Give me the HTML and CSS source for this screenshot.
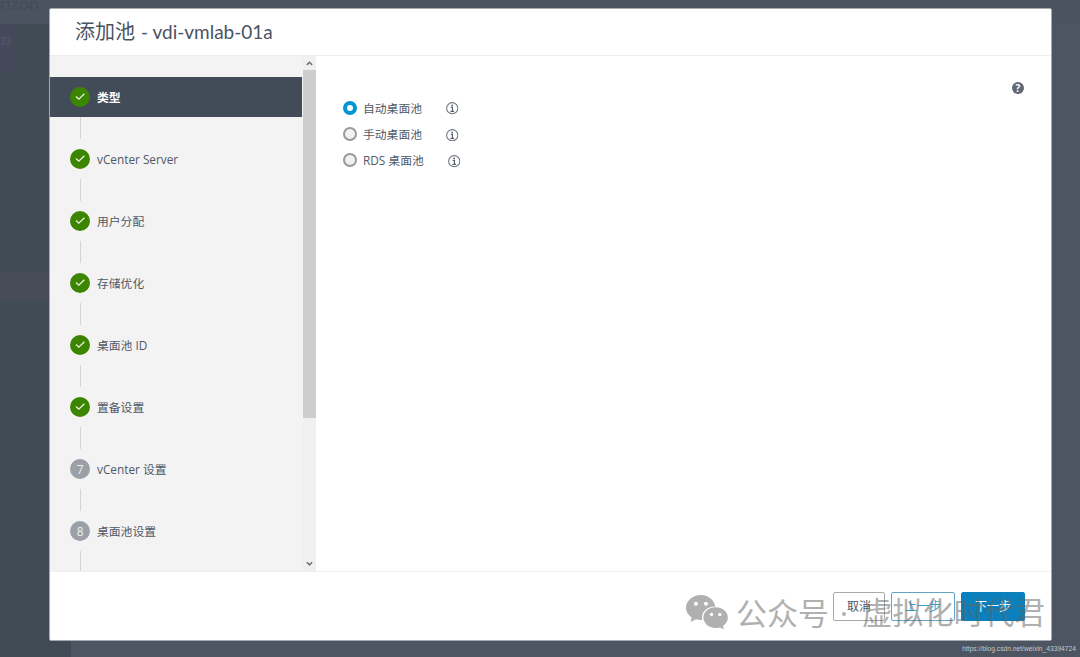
FILE: index.html
```
<!DOCTYPE html>
<html lang="zh-CN">
<head>
    <meta charset="UTF-8">
    <meta name="viewport" content="width=device-width, initial-scale=1.0">
    <title>添加池</title>
    <link rel="stylesheet" href="styles.css">
</head>
<body>
    <div class="backdrop">
        <div class="topbar"><span>rizon<sup>®</sup></span></div>
        <div class="sidenav">
            <div class="badge">33</div>
            <div class="nav-active"></div>
        </div>
    </div>

    <svg width="0" height="0" class="defs">
        <symbol id="check" viewBox="0 0 20 20"><path d="M6 9.600l2.800 2.600L14.400 6.700" fill="none" stroke="#e9f3e2" stroke-width="1.300"/></symbol>
        <symbol id="info" viewBox="0 0 12 12">
            <circle cx="6" cy="6" r="5.400" fill="none" stroke="#6b737e" stroke-width="1"/>
            <circle cx="5.900" cy="3.200" r=".85" fill="#565f6b"/>
            <path d="M4.600 5.200h1.600v3.700M4.300 9h3.500" fill="none" stroke="#565f6b" stroke-width="1.100"/>
        </symbol>
    </svg>

    <div class="modal">
        <div class="modal-header"><span class="title-cn">添加池</span><span class="title-id">- vdi-vmlab-01a</span></div>
        <div class="modal-body">
            <div class="steps">
                <div class="step active"><svg class="dot done"><use href="#check"/></svg><span>类型</span></div>
                <div class="line"></div>
                <div class="step"><svg class="dot done"><use href="#check"/></svg><span>vCenter Server</span></div>
                <div class="line"></div>
                <div class="step"><svg class="dot done"><use href="#check"/></svg><span>用户分配</span></div>
                <div class="line"></div>
                <div class="step"><svg class="dot done"><use href="#check"/></svg><span>存储优化</span></div>
                <div class="line"></div>
                <div class="step"><svg class="dot done"><use href="#check"/></svg><span>桌面池 ID</span></div>
                <div class="line"></div>
                <div class="step"><svg class="dot done"><use href="#check"/></svg><span>置备设置</span></div>
                <div class="line"></div>
                <div class="step"><i class="dot">7</i><span>vCenter 设置</span></div>
                <div class="line"></div>
                <div class="step"><i class="dot">8</i><span>桌面池设置</span></div>
                <div class="line"></div>
            </div>
            <div class="scrollbar">
                <svg width="13" height="14"><path d="M3.900 8.900L6.500 6.300l2.600 2.600" fill="none" stroke="#707070" stroke-width="1.500"/></svg>
                <div class="thumb"></div>
                <svg width="13" height="14"><path d="M3.900 5.300l2.600 2.600 2.600-2.600" fill="none" stroke="#707070" stroke-width="1.500"/></svg>
            </div>
            <div class="content">
                <div class="options">
                    <div class="option"><span class="radio checked"></span><span class="label">自动桌面池</span><svg class="info"><use href="#info"/></svg></div>
                    <div class="option"><span class="radio"></span><span class="label">手动桌面池</span><svg class="info"><use href="#info"/></svg></div>
                    <div class="option"><span class="radio"></span><span class="label">RDS 桌面池</span><svg class="info"><use href="#info"/></svg></div>
                </div>
                <div class="help">?</div>
            </div>
        </div>
        <div class="modal-footer">
            <div class="btn cancel">取消</div>
            <div class="btn back">上一步</div>
            <div class="btn next">下一步</div>
        </div>
    </div>

    <div class="watermark">
        <svg width="42" height="35" viewBox="0 0 42 35">
            <path fill-rule="evenodd" d="M15 0C6.700 0 0 5.700 0 12.800c0 4 2.200 7.500 5.600 9.800L4.700 27l5.400-2.700c1.500.4 3.200.6 4.900.6h1.400c-2.100-7 4-13.700 12.900-13.500C28.200 4.900 22.200 0 15 0zM9.900 6.700a2 2 0 110 4 2 2 0 010-4zm10.100 0a2 2 0 110 4 2 2 0 010-4z"/>
            <path fill-rule="evenodd" d="M29.600 12.300c-6.900 0-12.200 4.600-12.200 10.300 0 5.800 5.300 10.400 12.200 10.400 1.500 0 2.900-.2 4.200-.6l4.200 2.200-1-3.600c3-1.900 4.900-5 4.900-8.400 0-5.700-5.500-10.300-12.300-10.300zM25.500 17.800a1.700 1.700 0 110 3.400 1.700 1.700 0 010-3.400zm8.300 0a1.700 1.700 0 110 3.400 1.700 1.700 0 010-3.400z"/>
        </svg>
        <span class="wm-left">公众号</span><span class="wm-dot"></span><span class="wm-right">虚拟化时代君</span>
    </div>
    <div class="source">https://blog.csdn.net/weixin_43394724</div>
</body>
</html>
```
FILE: styles.css
```
* { margin: 0; padding: 0; box-sizing: border-box; }
body { width: 1080px; height: 657px; overflow: hidden; position: relative; background-color: #4d5562; color: #505866; font-family: "Open Sans", "Noto Sans CJK SC", sans-serif; font-size: 11.8px; padding: 8px 28px 0 49px; }
.defs { position: absolute; }

/* page behind the dialog */
.backdrop { position: absolute; inset: 0; z-index: -1; }
.topbar { height: 24px; background-color: #4b5361; color: #434c58; font: 18px/2px Lato, sans-serif; }
.topbar sup { font-size: 6px; }
.sidenav { width: 71px; height: 633px; background-color: #414b56; }
.badge { width: 14px; height: 47px; background-color: #45485a; color: #50546a; font: bold 10px/35px "Open Sans", sans-serif; }
.nav-active { height: 28px; margin-top: 202px; background-color: #484c59; }

.modal { width: 1003px; height: 633px; border: 1px solid #a5aab0; border-radius: 2px; background-color: #fff; display: flex; flex-direction: column; }
.modal-header { height: 47px; border-bottom: 1px solid #eee; padding-left: 25px; display: flex; line-height: 45px; color: #4b5363; }
.title-cn { font-size: 20px; width: 66px; }
.title-id { font: 19px/45px Lato, sans-serif; }
.modal-body { height: 515px; display: flex; }

.steps { width: 253px; padding-top: 21px; overflow: hidden; background-color: #f3f3f3; }
.step { height: 40px; width: 252px; padding-left: 20px; display: flex; align-items: center; gap: 7px; }
.step.active { background-color: #424c58; color: #fff; font-weight: bold; }
.step span { line-height: 20px; padding-bottom: 1px; }
.dot { width: 20px; height: 20px; border-radius: 50%; background-color: #9aa0a6; color: #f0f0f0; font-style: normal; text-align: center; line-height: 20px; }
.dot.done { background-color: #3c8500; }
.line { height: 22px; width: 1px; margin-left: 30px; background-color: #d3d5d8; }

.scrollbar { width: 13px; background-color: #f0f0f0; display: flex; flex-direction: column; }
.scrollbar svg:last-child { margin-top: auto; }
.thumb { height: 348px; background-color: #cdcdcd; }

.content { flex: 1; padding: 26px 27px 0 27px; display: flex; justify-content: space-between; }
.options { padding-top: 12px; }
.option { height: 26.4px; display: flex; align-items: center; }
.radio { width: 14px; height: 14px; border: 2px solid #9a9a9a; border-radius: 50%; background-color: #f1f1f1; }
.radio.checked { border: 4px solid #0095d3; background-color: #fff; margin-top: 1px; }
.label { margin: 0 24px 0 6px; }
.info { width: 12.500px; height: 12.500px; margin-top: 3px; }
.help { width: 12px; height: 12px; border-radius: 50%; background-color: #5f6873; color: #fff; font-size: 10px; font-weight: bold; line-height: 12px; text-align: center; }

.modal-footer { flex: 1; border-top: 1px solid #eee; padding: 20px 26px 0 0; display: flex; justify-content: flex-end; align-items: flex-start; }
.btn { height: 29px; border: 1px solid #a9a9a9; border-radius: 2px; font-size: 12px; line-height: 27px; text-align: center; }
.cancel { width: 52px; margin-right: 6px; color: #4c5462; }
.back { width: 64px; margin-right: 6px; border-color: #65a3c4; color: #3aa2d2; }
.next { width: 64px; border-color: #0b80bd; background-color: #0b80bd; color: #fff; }

.watermark { position: absolute; left: 686px; top: 595px; display: flex; color: #636363; fill: #636363; opacity: .5; }
.watermark span { font: 31px/33px "Noto Sans CJK SC", sans-serif; white-space: nowrap; }
.watermark .wm-left { margin-left: 8px; }
.watermark .wm-dot { width: 4px; height: 4px; margin: 17px 16px 0 13px; border-radius: 50%; background-color: #636363; }
.watermark .wm-right { font-size: 30.500px; }
.source { position: absolute; right: 4px; top: 643px; color: #c4c7cb; font: 6.700px/12px "Liberation Sans", sans-serif; }
```
